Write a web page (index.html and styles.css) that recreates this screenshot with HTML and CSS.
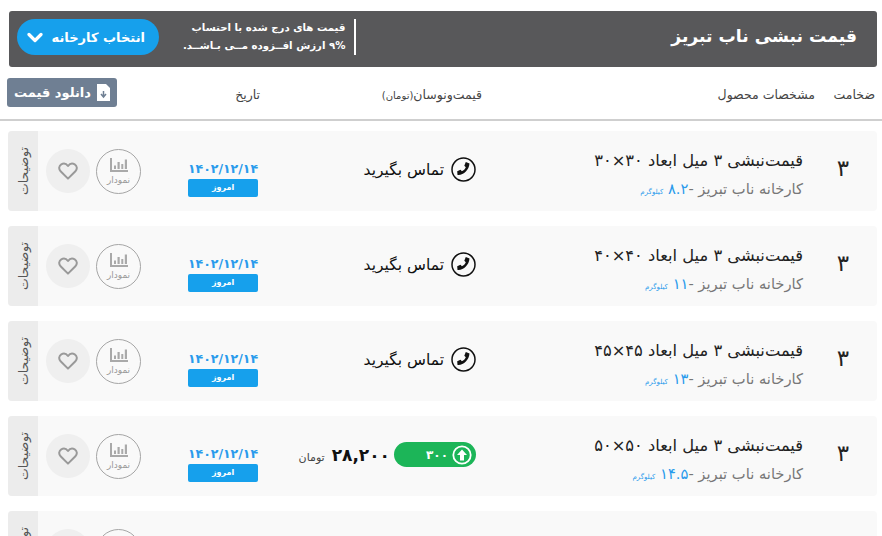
FILE: index.html
```html
<!DOCTYPE html>
<html lang="fa" dir="rtl">
<head>
<meta charset="utf-8">
<title>قیمت نبشی ناب تبریز</title>
<link rel="stylesheet" href="styles.css">
</head>
<body>
<svg class="defs" width="0" height="0" aria-hidden="true">
  <symbol id="i-phone" viewBox="0 0 25 25">
    <circle cx="12.5" cy="12.500" r="11.500" fill="none" stroke="#111" stroke-width="1.500"/>
    <path d="M6.500 18c6 .6 11.500-5 12-11.500l-3.700-1.400-1.500 3.600 1.500 1.500c-.7 1.700-2.200 3.300-3.900 4l-1.400-1.500-3.300 1.500z" fill="#111"/>
  </symbol>
  <symbol id="i-chart" viewBox="0 0 18 14">
    <path d="M0 0h2v12H18v2H0z" fill="#a9a9a9"/>
    <path d="M4 7.500h2v3.500H4zM7.500 4h2.200v7H7.500zM11.300 6h2v5h-2zM14.800 1.500H17V11h-2.200z" fill="#a9a9a9"/>
  </symbol>
  <symbol id="i-heart" viewBox="0 0 20 18">
    <path d="M10 16.600 2.600 9.300C.4 7.100.9 3.700 3.300 2.300 5.500 1 8.300 1.600 10 4c1.700-2.400 4.500-3 6.700-1.700 2.400 1.400 2.900 4.800.7 7z" fill="none" stroke="#999" stroke-width="2" stroke-linejoin="round"/>
  </symbol>
</svg>

<header class="banner">
  <h1 class="banner-title">قیمت نبشی ناب تبریز</h1>
  <div class="banner-side">
    <p class="banner-note">قیمت های درج شده با احتساب<br>۹% ارزش افــزوده مــی بـاشــد.</p>
    <button class="factory-btn" type="button">انتخاب کارخانه
      <svg class="chev" viewBox="0 0 16 11"><path d="M2 2.500 8 8.500l6-6" fill="none" stroke="#fff" stroke-width="3.200" stroke-linecap="round" stroke-linejoin="round"/></svg>
    </button>
  </div>
</header>

<div class="table-head">
  <span class="th th-size">ضخامت</span>
  <span class="th th-spec">مشخصات محصول</span>
  <span class="th th-price">قیمت‌ونوسان<small>(تومان)</small></span>
  <span class="th th-date">تاریخ</span>
  <button class="dl-btn" type="button">
    <svg class="dl-icon" viewBox="0 0 13 17"><path d="M0 0h9l4 4v13H0z" fill="#fff"/><path d="M6.500 7v5M4 10l2.500 3L9 10" fill="none" stroke="#6f7f93" stroke-width="1.500"/></svg>
    دانلود قیمت
  </button>
</div>

<main class="rows">
  <article class="row">
    <div class="size">۳</div>
    <div class="product">
      <div class="p-title">قیمت‌نبشی ۳ میل ابعاد ۳۰×۳۰</div>
      <div class="p-sub">کارخانه ناب تبریز -<span class="w">۸.۲ </span><span class="kg">کیلوگرم</span></div>
    </div>
    <div class="price"><svg class="phone"><use href="#i-phone"/></svg><span class="call">تماس بگیرید</span></div>
    <div class="date"><span class="d">۱۴۰۲/۱۲/۱۴</span><span class="today">امروز</span></div>
    <div class="chart"><svg class="chart-i"><use href="#i-chart"/></svg><span>نمودار</span></div>
    <div class="fav"><svg class="heart"><use href="#i-heart"/></svg></div>
    <div class="desc"><span>توضیحات</span></div>
  </article>
  <article class="row">
    <div class="size">۳</div>
    <div class="product">
      <div class="p-title">قیمت‌نبشی ۳ میل ابعاد ۴۰×۴۰</div>
      <div class="p-sub">کارخانه ناب تبریز -<span class="w">۱۱ </span><span class="kg">کیلوگرم</span></div>
    </div>
    <div class="price"><svg class="phone"><use href="#i-phone"/></svg><span class="call">تماس بگیرید</span></div>
    <div class="date"><span class="d">۱۴۰۲/۱۲/۱۴</span><span class="today">امروز</span></div>
    <div class="chart"><svg class="chart-i"><use href="#i-chart"/></svg><span>نمودار</span></div>
    <div class="fav"><svg class="heart"><use href="#i-heart"/></svg></div>
    <div class="desc"><span>توضیحات</span></div>
  </article>
  <article class="row">
    <div class="size">۳</div>
    <div class="product">
      <div class="p-title">قیمت‌نبشی ۳ میل ابعاد ۴۵×۴۵</div>
      <div class="p-sub">کارخانه ناب تبریز -<span class="w">۱۳ </span><span class="kg">کیلوگرم</span></div>
    </div>
    <div class="price"><svg class="phone"><use href="#i-phone"/></svg><span class="call">تماس بگیرید</span></div>
    <div class="date"><span class="d">۱۴۰۲/۱۲/۱۴</span><span class="today">امروز</span></div>
    <div class="chart"><svg class="chart-i"><use href="#i-chart"/></svg><span>نمودار</span></div>
    <div class="fav"><svg class="heart"><use href="#i-heart"/></svg></div>
    <div class="desc"><span>توضیحات</span></div>
  </article>
  <article class="row">
    <div class="size">۳</div>
    <div class="product">
      <div class="p-title">قیمت‌نبشی ۳ میل ابعاد ۵۰×۵۰</div>
      <div class="p-sub">کارخانه ناب تبریز -<span class="w">۱۴.۵ </span><span class="kg">کیلوگرم</span></div>
    </div>
    <div class="price">
      <div class="pill">
        <svg class="up" viewBox="0 0 20 20"><circle cx="10" cy="10" r="8.700" fill="none" stroke="#fff" stroke-width="1.800"/><path d="M10 4.500 15 10h-3v5.500H8V10H5z" fill="#fff"/></svg>
        <span>۳۰۰</span>
      </div>
      <span class="amount">۲۸,۲۰۰</span><span class="unit">تومان</span>
    </div>
    <div class="date"><span class="d">۱۴۰۲/۱۲/۱۴</span><span class="today">امروز</span></div>
    <div class="chart"><svg class="chart-i"><use href="#i-chart"/></svg><span>نمودار</span></div>
    <div class="fav"><svg class="heart"><use href="#i-heart"/></svg></div>
    <div class="desc"><span>توضیحات</span></div>
  </article>
  <article class="row">
    <div class="size"></div>
    <div class="product"></div>
    <div class="price"></div>
    <div class="date"></div>
    <div class="chart"></div>
    <div class="fav"></div>
    <div class="desc"><span>توضیحات</span></div>
  </article>
</main>
</body>
</html>
```
FILE: styles.css
```css
* { box-sizing: border-box; }
html, body { margin: 0; height: 536px; overflow: hidden; background: #fff; }
body { font-family: "DejaVu Sans", "Noto Sans", sans-serif; color: #222; padding: 11px 5px 0 8px; }
.defs { display: block; height: 0; }
.banner { margin-left: 1px; height: 56px; background: #58585a; border-radius: 3px; display: flex; align-items: center; justify-content: space-between; padding: 0 20px 4px 8px; color: #fff; }
.banner-title { margin: 0; font-size: 17.200px; font-weight: bold; line-height: 1; }
.banner-side { display: flex; align-items: center; }
.banner-note { margin: 0 0 0 24px; padding-right: 9px; border-right: 2px solid #fff; font-size: 10.200px; font-weight: bold; line-height: 18px; height: 36px; white-space: nowrap; }
.factory-btn { width: 142px; height: 36px; margin: 0; border: 0; border-radius: 18px; background: #16a0ec; color: #fff; font: bold 13px "DejaVu Sans", sans-serif; display: flex; align-items: center; justify-content: space-between; padding: 0 14px 0 10px; white-space: nowrap; }
.chev { width: 16px; height: 11px; }
.table-head { position: relative; height: 54px; display: flex; align-items: flex-start; margin: 0 -5px 10px -8px; border-bottom: 2px solid #cfcfcf; }
.th { font-size: 12.500px; color: #444; white-space: nowrap; margin-top: 20px; line-height: 16px; }
.th small { font-size: 10px; }
.th-size { margin-right: 7px; width: 52px; flex: none; }
.th-spec { width: 333px; margin-right: 8px; flex: none; }
.th-price { width: 222px; flex: none; }
.th-date { width: 90px; flex: none; }
.dl-btn { position: absolute; left: 7px; top: 11px; width: 110px; height: 29px; border: 0; border-radius: 3px; background: #6f7f93; color: #fff; font: bold 13px "DejaVu Sans", sans-serif; display: flex; align-items: center; gap: 6px; padding: 0 7px 0 0; white-space: nowrap; }
.dl-icon { width: 13px; height: 17px; flex: none; }
.rows { display: flex; flex-direction: column; gap: 15px; }
.row { display: flex; height: 80px; flex: none; background: #f9f9f9; border-radius: 4px; align-items: center; overflow: hidden; }
.size { width: 74px; flex: none; text-align: center; font-size: 23px; padding: 0 0 6px 6px; color: #222; }
.product { width: 327px; flex: none; white-space: nowrap; padding-top: 8px; }
.p-title { font-size: 16.300px; color: #222; line-height: 22px; margin-bottom: 8px; }
.p-sub { font-size: 14.700px; color: #777; line-height: 18px; }
.w { color: #2a9bec; }
.kg { color: #2a9bec; font-size: 7px; }
.price { width: 218px; flex: none; display: flex; align-items: center; white-space: nowrap; padding-bottom: 3px; }
.phone { width: 25px; height: 25px; flex: none; }
.call { margin-right: 7px; font-size: 15.500px; color: #111; }
.pill { width: 82px; height: 25px; border-radius: 13px; background: #1cb558; color: #fff; display: flex; align-items: center; padding: 0 4px; gap: 4px; font-size: 12px; font-weight: bold; }
.up { width: 20px; height: 20px; flex: none; }
.amount { margin-right: 4px; font-size: 17px; font-weight: bold; color: #111; }
.unit { margin-right: 7px; font-size: 11px; color: #444; margin-top: 5px; }
.date { width: 70px; flex: none; display: flex; flex-direction: column; align-items: center; padding-top: 14px; }
.date .d { font-size: 12.500px; font-weight: bold; color: #2a9bec; line-height: 20px; white-space: nowrap; }
.today { width: 70px; height: 18px; background: #16a0ec; color: #fff; border-radius: 2px; font-size: 8px; font-weight: bold; line-height: 18px; text-align: center; }
.chart { width: 45px; height: 45px; margin-right: 47px; flex: none; border-radius: 50%; border: 1px solid #a5a5a5; display: flex; flex-direction: column; align-items: center; justify-content: center; font-size: 9px; color: #999; }
.chart-i { width: 18px; height: 14px; margin-bottom: 3px; }
.fav { width: 44px; height: 44px; margin-right: 6px; flex: none; border-radius: 50%; background: #efefef; display: flex; align-items: center; justify-content: center; }
.heart { width: 20px; height: 18px; }
.desc { width: 30px; height: 100%; margin-right: 8px; flex: none; background: #ececec; display: flex; align-items: center; justify-content: center; }
.desc span { writing-mode: vertical-rl; transform: rotate(180deg); font-size: 12.500px; color: #555; white-space: nowrap; }
```
